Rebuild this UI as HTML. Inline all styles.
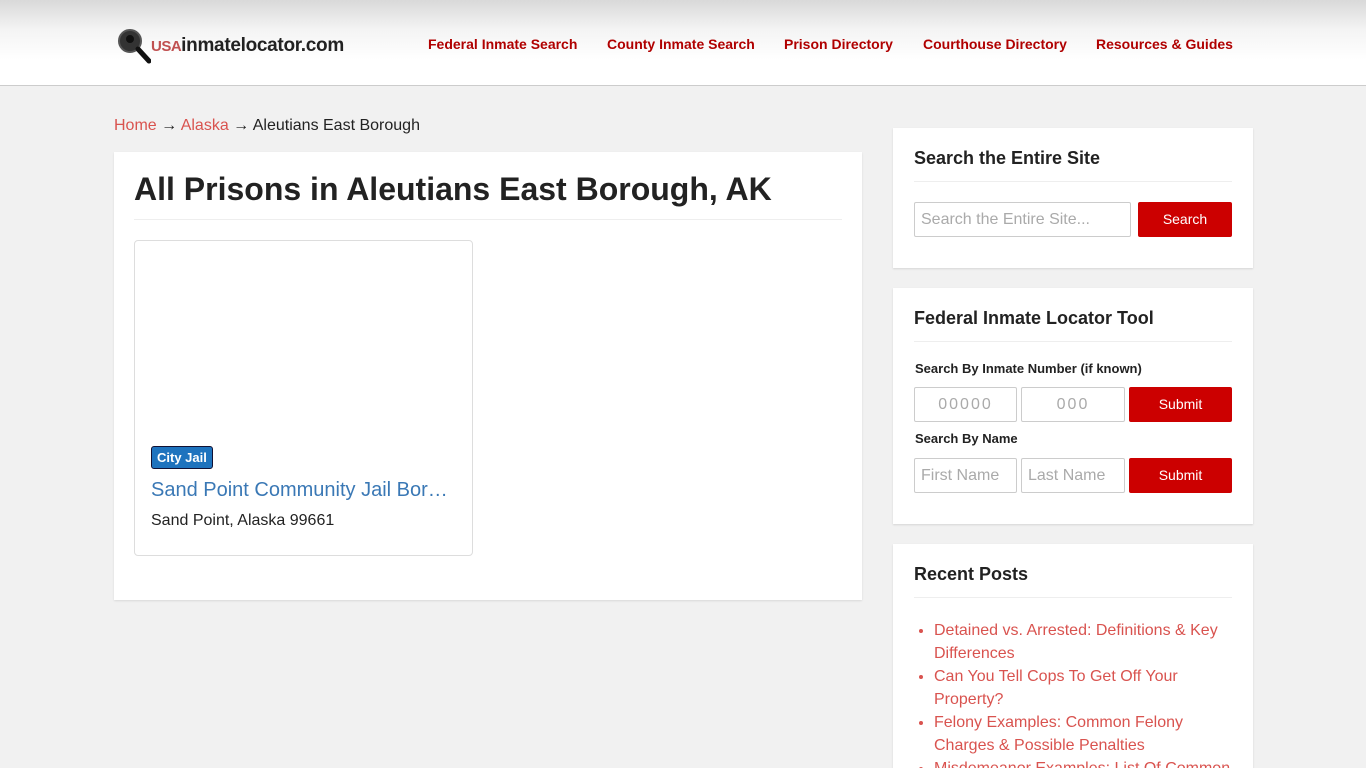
<!DOCTYPE html>
<html><head><meta charset="utf-8"><style>
*{box-sizing:border-box;margin:0;padding:0}
html,body{width:1366px;height:768px;overflow:hidden}
body{background:#f1f1f1;font-family:"Liberation Sans",sans-serif;color:#222;position:relative}
.hdr{height:86px;background:linear-gradient(#d9d9d9 0,#f4f4f4 30px,#fff 60px);border-bottom:1px solid #ccc;position:relative}
.logo{position:absolute;left:117px;top:28px;display:flex;align-items:center}
.logo span{font-size:19px;color:#222;font-weight:bold;letter-spacing:-.3px}
.logo b{font-weight:bold;color:#c05050;font-size:15px;letter-spacing:-.5px}
nav{position:absolute;top:36px;left:428px;font-size:14px;font-weight:bold;color:#b00000}
nav a{position:absolute;white-space:nowrap}
.crumb{position:absolute;left:114px;top:117px;font-size:16px}
.crumb a{color:#d9534f}
.main{position:absolute;left:114px;top:152px;width:748px;height:448px;background:#fff;box-shadow:0 1px 2px rgba(0,0,0,.1)}
h1{position:absolute;left:20px;top:19px;font-size:32px;font-weight:bold;white-space:nowrap}
.hr{position:absolute;left:20px;right:20px;top:67px;border-top:1px solid #eee}
.card{position:absolute;left:20px;top:88px;width:339px;height:316px;border:1px solid #ddd;border-radius:4px}
.badge{position:absolute;left:16px;top:205px;background:#1e73be;color:#fff;border:1px solid #113;border-radius:3px;font-size:13px;font-weight:bold;padding:3px 5px}
.ct{position:absolute;left:16px;top:238px;font-size:20px;color:#3a78b5}
.ca{position:absolute;left:16px;top:271px;font-size:16px}
.w{position:absolute;left:893px;width:360px;background:#fff;box-shadow:0 1px 2px rgba(0,0,0,.12)}
.w h3{position:absolute;left:21px;top:20px;font-size:18px;font-weight:bold}
.w .l{position:absolute;left:21px;right:21px;top:53px;border-top:1px solid #eee}
.in{position:absolute;height:35px;border:1px solid #ccc;border-radius:2px;color:#aaa;font-size:16px;padding:8px 6px}
.btn{position:absolute;height:35px;background:#c00;color:#fff;border-radius:2px;font-size:14px;text-align:center;line-height:35px}
.lb{position:absolute;left:22px;font-size:13px;font-weight:bold}
ul{position:absolute;left:41px;top:75px;width:300px;font-size:16px;line-height:23px;color:#d9534f}
</style></head><body>
<div class="hdr">
<div class="logo"><svg width="34" height="36" viewBox="0 0 34 36"><circle cx="13" cy="13" r="11" fill="#333" stroke="#555" stroke-width="2"/><circle cx="13" cy="11" r="4" fill="#111"/><path d="M21 21 L32 33" stroke="#111" stroke-width="5" stroke-linecap="round"/></svg><b>USA</b><span>inmatelocator.com</span></div>
<nav><a style="left:0">Federal Inmate Search</a><a style="left:179px">County Inmate Search</a><a style="left:356px">Prison Directory</a><a style="left:495px">Courthouse Directory</a><a style="left:668px">Resources &amp; Guides</a></nav>
</div>
<div class="crumb"><a>Home</a> → <a>Alaska</a> → Aleutians East Borough</div>
<div class="main"><h1>All Prisons in Aleutians East Borough, AK</h1><div class="hr"></div>
<div class="card"><div class="badge">City Jail</div><div class="ct">Sand Point Community Jail Bor…</div><div class="ca">Sand Point, Alaska 99661</div></div></div>
<div class="w" style="top:128px;height:140px"><h3>Search the Entire Site</h3><div class="l"></div>
<div class="in" style="left:21px;top:74px;width:217px">Search the Entire Site...</div><div class="btn" style="left:245px;top:74px;width:94px">Search</div></div>
<div class="w" style="top:288px;height:236px"><h3>Federal Inmate Locator Tool</h3><div class="l"></div>
<div class="lb" style="top:73px">Search By Inmate Number (if known)</div>
<div class="in" style="left:21px;top:99px;width:103px;text-align:center;letter-spacing:2px">00000</div><div class="in" style="left:128px;top:99px;width:104px;text-align:center;letter-spacing:2px">000</div><div class="btn" style="left:236px;top:99px;width:103px">Submit</div>
<div class="lb" style="top:143px">Search By Name</div>
<div class="in" style="left:21px;top:170px;width:103px">First Name</div><div class="in" style="left:128px;top:170px;width:104px">Last Name</div><div class="btn" style="left:236px;top:170px;width:103px">Submit</div></div>
<div class="w" style="top:544px;height:224px;overflow:hidden"><h3>Recent Posts</h3><div class="l"></div>
<ul><li>Detained vs. Arrested: Definitions &amp; Key Differences</li><li>Can You Tell Cops To Get Off Your Property?</li><li>Felony Examples: Common Felony Charges &amp; Possible Penalties</li><li>Misdemeanor Examples: List Of Common</li></ul></div>
</body></html>
